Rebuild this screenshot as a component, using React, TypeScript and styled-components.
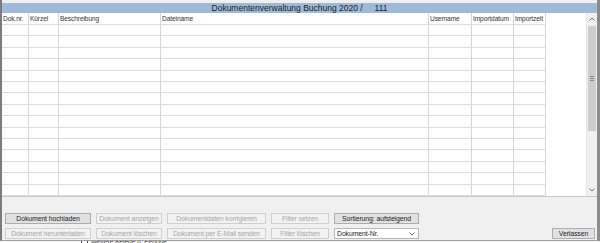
import React from "react";
import styled, { createGlobalStyle } from "styled-components";

const GlobalStyle = createGlobalStyle`
    html, body {
        margin: 0;
        padding: 0;
        background: #fafafa;
        overflow: hidden;
    }
    body {
        font-family: "Liberation Sans", Arial, sans-serif;
        color: #222;
    }
`;

const columns = [
    { label: "Dok.nr.", width: 27 },
    { label: "Kürzel", width: 30 },
    { label: "Beschreibung", width: 102 },
    { label: "Dateiname", width: 268 },
    { label: "Username", width: 43 },
    { label: "Importdatum", width: 42 },
    { label: "Importzeit", width: 32 },
];

const ROW_COUNT = 15;

const Page = styled.div`
    width: 600px;
    height: 243px;
    overflow: hidden;
`;

const Window = styled.div`
    box-sizing: border-box;
    width: 600px;
    height: 241px;
    display: flex;
    flex-direction: column;
    background: #f0f0f0;
    border-left: 2px solid #7c7c7c;
    border-right: 3px solid #8c8c8c;
    border-bottom: 1px solid #a0a0a0;
    padding-top: 3px;
`;

const TitleBar = styled.div`
    height: 10px;
    background: #9dbad8;
    display: flex;
    align-items: center;
    justify-content: center;
    font-size: 8.5px;
    color: #1c1c1c;
    white-space: pre;
`;

const GridArea = styled.div`
    height: 183px;
    display: flex;
    background: #fff;
`;

const Table = styled.div`
    flex: 1;
    display: flex;
    flex-direction: column;
`;

const Row = styled.div<{ $header?: boolean }>`
    display: flex;
    flex: ${(p) => (p.$header ? "0 0 12px" : "1 1 0")};
`;

const Cell = styled.div<{ $w: number }>`
    box-sizing: border-box;
    width: ${(p) => p.$w}px;
    border-right: 1px solid #d6d6d6;
    border-bottom: 1px solid #dcdcdc;
    font-size: 6.6px;
    letter-spacing: -0.1px;
    color: #333;
    padding-left: 1px;
    display: flex;
    align-items: center;
    white-space: nowrap;
    overflow: hidden;
`;

const Filler = styled.div`
    flex: 1;
`;

const Scrollbar = styled.div`
    width: 10px;
    display: flex;
    flex-direction: column;
    background: #f0f0f0;
    border-left: 1px solid #e6e6e6;
`;

const ArrowBox = styled.div`
    height: 12px;
    display: flex;
    align-items: center;
    justify-content: center;
`;

const Track = styled.div`
    flex: 1;
    display: flex;
    flex-direction: column;
    padding: 1px 1px 0;
`;

const Thumb = styled.div`
    height: 105px;
    background: #cdcdcd;
    display: flex;
    align-items: center;
    justify-content: center;
`;

const Grip = styled.div`
    width: 4px;
    height: 5px;
    background: repeating-linear-gradient(#8a8a8a 0 1px, transparent 1px 2px);
`;

const Panel = styled.div`
    flex: 1;
    display: flex;
    align-items: flex-end;
    padding: 0 2px 1px 3px;
    border-top: 1px solid #c8c8c8;
`;

const ButtonGrid = styled.div`
    display: grid;
    grid-template-columns: 86px 66px 99px 58px 85px;
    grid-template-rows: 11px 11px;
    column-gap: 5px;
    row-gap: 4px;
`;

const Button = styled.div<{ $disabled?: boolean }>`
    box-sizing: border-box;
    display: flex;
    align-items: center;
    justify-content: center;
    font-size: 6.9px;
    letter-spacing: -0.1px;
    white-space: nowrap;
    overflow: hidden;
    color: ${(p) => (p.$disabled ? "#a6a6a6" : "#1e1e1e")};
    background: ${(p) => (p.$disabled ? "#f2f2f2" : "#e1e1e1")};
    border: 1px solid ${(p) => (p.$disabled ? "#cfcfcf" : "#adadad")};
`;

const Select = styled.div`
    box-sizing: border-box;
    display: flex;
    align-items: center;
    justify-content: space-between;
    padding: 0 3px 0 2px;
    font-size: 6.9px;
    letter-spacing: -0.1px;
    color: #1e1e1e;
    background: #fff;
    border: 1px solid #b8b8b8;
`;

const ExitButton = styled(Button)`
    margin-left: auto;
    width: 43px;
    height: 11px;
`;

const Below = styled.div`
    display: flex;
    align-items: center;
    gap: 3px;
    margin-left: 81px;
    height: 2px;
    overflow: hidden;
    font-size: 6.5px;
    line-height: 6px;
    color: #333;
`;

const CheckBox = styled.div`
    width: 5px;
    height: 5px;
    border: 1px solid #555;
    background: #fff;
`;

const Chevron: React.FC<{ up?: boolean }> = ({ up }) => (
    <svg width="6" height="4" viewBox="0 0 6 4">
        <path
            d={up ? "M0.5 3.5 L3 1 L5.5 3.5" : "M0.5 0.5 L3 3 L5.5 0.5"}
            fill="none"
            stroke="#606060"
            strokeWidth="0.9"
        />
    </svg>
);

export default function App() {
    const rows = Array.from({ length: ROW_COUNT });
    return (
        <Page>
            <GlobalStyle />
            <Window>
                <TitleBar>{"Dokumentenverwaltung Buchung 2020 /     111"}</TitleBar>
                <GridArea>
                    <Table>
                        <Row $header>
                            {columns.map((c) => (
                                <Cell key={c.label} $w={c.width}>
                                    {c.label}
                                </Cell>
                            ))}
                            <Filler />
                        </Row>
                        {rows.map((_, i) => (
                            <Row key={i}>
                                {columns.map((c) => (
                                    <Cell key={c.label} $w={c.width} />
                                ))}
                                <Filler />
                            </Row>
                        ))}
                    </Table>
                    <Scrollbar>
                        <ArrowBox>
                            <Chevron up />
                        </ArrowBox>
                        <Track>
                            <Thumb>
                                <Grip />
                            </Thumb>
                        </Track>
                        <ArrowBox>
                            <Chevron />
                        </ArrowBox>
                    </Scrollbar>
                </GridArea>
                <Panel>
                    <ButtonGrid>
                        <Button>Dokument hochladen</Button>
                        <Button $disabled>Dokument anzeigen</Button>
                        <Button $disabled>Dokumentdaten korrigieren</Button>
                        <Button $disabled>Filter setzen</Button>
                        <Button>Sortierung: aufsteigend</Button>
                        <Button $disabled>Dokument herunterladen</Button>
                        <Button $disabled>Dokument löschen</Button>
                        <Button $disabled>Dokument per E-Mail senden</Button>
                        <Button $disabled>Filter löschen</Button>
                        <Select>
                            <span>Dokument-Nr.</span>
                            <Chevron />
                        </Select>
                    </ButtonGrid>
                    <ExitButton>Verlassen</ExitButton>
                </Panel>
            </Window>
            <Below>
                <CheckBox />
                <span>Weitere Belege d. Periode</span>
            </Below>
        </Page>
    );
}
